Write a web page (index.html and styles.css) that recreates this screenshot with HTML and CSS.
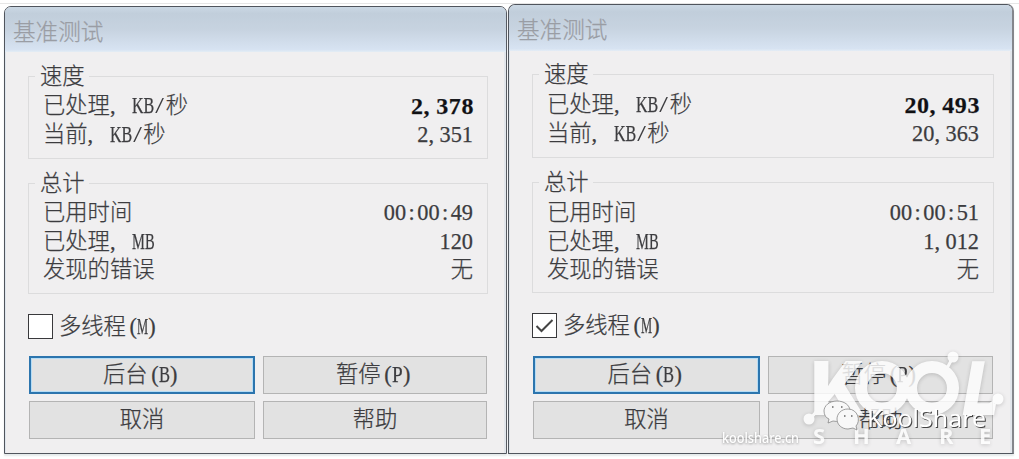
FILE: index.html
```html
<!DOCTYPE html>
<html lang="zh-CN">
<head>
    <meta charset="UTF-8">
    <meta name="viewport" content="width=device-width, initial-scale=1.0">
    <title>基准测试</title>
    <link rel="stylesheet" href="styles.css">
</head>
<body>
    <div class="windows">
        <!-- 单线程 -->
        <div class="window window-left">
            <div class="title-bar">基准测试</div>
            <div class="content">
                <div class="group speed">
                    <span class="legend">速度</span>
                    <div class="row"><span>已处理<i>,</i><i></i><b class="kb">KB</b><i class="slash">/</i>秒</span><strong>2<i>,</i>378</strong></div>
                    <div class="row"><span>当前<i>,</i><i></i><b class="kb">KB</b><i class="slash">/</i>秒</span><span>2<i>,</i>351</span></div>
                </div>
                <div class="group total">
                    <span class="legend">总计</span>
                    <div class="row"><span>已用时间</span><span>00<i class="colon">:</i>00<i class="colon">:</i>49</span></div>
                    <div class="row"><span>已处理<i>,</i><i></i><b class="mb">MB</b></span><span>120</span></div>
                    <div class="row"><span>发现的错误</span><span>无</span></div>
                </div>
                <div class="check-row">
                    <span class="checkbox"></span>
                    <span class="check-label">多线程<i class="open">(</i><b class="m">M</b><i>)</i></span>
                </div>
                <div class="buttons">
                    <button class="button button-default"><span>后台<i class="open">(</i><b class="b">B</b><i>)</i></span></button>
                    <button class="button"><span>暂停<i class="open">(</i><b class="p">P</b><i>)</i></span></button>
                    <button class="button">取消</button>
                    <button class="button">帮助</button>
                </div>
            </div>
        </div>

        <!-- 多线程 -->
        <div class="window window-right">
            <div class="title-bar">基准测试</div>
            <div class="content">
                <div class="group speed">
                    <span class="legend">速度</span>
                    <div class="row"><span>已处理<i>,</i><i></i><b class="kb">KB</b><i class="slash">/</i>秒</span><strong>20<i>,</i>493</strong></div>
                    <div class="row"><span>当前<i>,</i><i></i><b class="kb">KB</b><i class="slash">/</i>秒</span><span>20<i>,</i>363</span></div>
                </div>
                <div class="group total">
                    <span class="legend">总计</span>
                    <div class="row"><span>已用时间</span><span>00<i class="colon">:</i>00<i class="colon">:</i>51</span></div>
                    <div class="row"><span>已处理<i>,</i><i></i><b class="mb">MB</b></span><span>1<i>,</i>012</span></div>
                    <div class="row"><span>发现的错误</span><span>无</span></div>
                </div>
                <div class="check-row">
                    <span class="checkbox">
                        <svg width="23" height="23" viewBox="0 0 23 23"><path d="M3.5 12 L8.5 17 L19.5 6" fill="none" stroke="#444" stroke-width="2"/></svg>
                    </span>
                    <span class="check-label">多线程<i class="open">(</i><b class="m">M</b><i>)</i></span>
                </div>
                <div class="buttons">
                    <button class="button button-default"><span>后台<i class="open">(</i><b class="b">B</b><i>)</i></span></button>
                    <button class="button"><span>暂停<i class="open">(</i><b class="p">P</b><i>)</i></span></button>
                    <button class="button">取消</button>
                    <button class="button">帮助</button>
                </div>
            </div>
        </div>
    </div>

    <!-- 水印 -->
    <svg class="watermark" width="309" height="119" viewBox="710 340 309 119">
        <g class="logo">
            <text class="kool" y="415"><tspan x="811" textLength="54" lengthAdjust="spacingAndGlyphs">K</tspan></text>
            <circle cx="882" cy="388" r="21"/>
            <circle cx="932" cy="388" r="21"/>
            <text class="kool" y="415" transform="translate(73 0) skewX(-10)"><tspan x="960" textLength="36" lengthAdjust="spacingAndGlyphs">L</tspan></text>
            <path d="M810 419 L829 397 M945 372 L953 357 M986 408 L997 399"/>
            <circle class="dot" cx="809" cy="419" r="5.5"/>
            <circle class="dot" cx="953" cy="357" r="5.5"/>
            <circle class="dot" cx="998" cy="399" r="5.5"/>
            <text class="share" y="444" x="813 853 896 939 979">SHARE</text>
        </g>
        <g class="wechat">
            <path d="M837 401 C829 401 824 406 824 411 C824 415 826 418 829 419 L828 423 L833 421 C842 423 850 418 850 411 C850 405 844 401 837 401 Z"/>
            <path d="M848 409 C841 409 837 414 837 419 C837 425 842 429 848 429 L853 428 L857 430 L856 426 C861 421 858 409 848 409 Z"/>
            <path class="eyes" d="M832 407 h1.5 M841 407 h1.5 M844 416 h1.5 M851 416 h1.5"/>
        </g>
        <text class="name" x="867" y="427" textLength="119" lengthAdjust="spacingAndGlyphs">KoolShare</text>
        <text class="site" x="722" y="443" textLength="77" lengthAdjust="spacingAndGlyphs">koolshare.cn</text>
    </svg>
</body>
</html>
```
FILE: styles.css
```css
* {
    box-sizing: border-box;
}

body {
    margin: 0;
    padding-top: 3px;
    height: 459px;
    overflow: hidden;
    background: linear-gradient(#fff 3px, #e6e6e6 3px, #e6e6e6 4px, #fff 4px);
    font-family: "Liberation Serif", "Noto Sans CJK SC", serif;
    font-size: 22.3px;
    font-weight: 300;
    color: #3c3c3f;
    -webkit-text-stroke: 0.25px #3c3c3f;
}

.windows {
    display: flex;
    align-items: flex-end;
    gap: 1px;
    height: 451px;
    padding-left: 4px;
}

.window {
    background: #f0eff0;
    border: 1px solid #50555d;
    border-radius: 7px 7px 0 0;
    box-shadow: inset 1px 0 #dfe6ed, inset -2px 0 #e2e6ec, 0 2px 2px #e4e9ea;
    overflow: hidden;
}

.window-left {
    width: 503px;
    height: 448px;
}

.window-right {
    width: 506px;
    height: 450px;
    border-right: 2px solid #84868c;
}

.title-bar {
    height: 45px;
    padding-left: 8px;
    background: linear-gradient(#cbd8e4 0, #c1cedb 15%, #c7d3e0 50%, #d7e3f2 95%, #e4edf5);
    color: #9a9da4;
    -webkit-text-stroke: 0.25px #9a9da4;
    font-family: "Noto Sans CJK SC", sans-serif;
    font-size: 22.6px;
    line-height: 48px;
}

.window-right .title-bar {
    height: 46px;
}

.content {
    padding: 24px 18px 0 23px;
}

.window-right .content {
    padding-top: 23px;
}

.group {
    border: 1px solid #dcdcdd;
    padding: 0 14px;
}

.speed {
    height: 83px;
    margin-bottom: 24px;
}

.total {
    height: 111px;
    margin-bottom: 19px;
}

.window-right .speed {
    height: 84px;
}

.legend {
    display: block;
    width: 54px;
    height: 28px;
    margin: 0 0 -13px -8px;
    padding-left: 5px;
    background: #f0eff0;
    line-height: 28px;
    transform: translateY(-14px);
}

.window-right .legend {
    margin-bottom: -12px;
}

.row {
    display: flex;
    justify-content: space-between;
    height: 28.5px;
    line-height: 28px;
}

/* 半角字符 */
i {
    display: inline-block;
    width: 11.15px;
    font-style: normal;
    text-align: left;
}

.colon {
    text-align: center;
}

.open {
    text-align: right;
}

.slash {
    text-align: center;
    -webkit-text-stroke: 0;
    transform: scaleX(1.4);
}

b {
    display: inline-block;
    width: 11.15px;
    font-weight: 400;
    white-space: nowrap;
    transform-origin: left;
}

.kb {
    width: 22.3px;
    transform: scaleX(0.72);
}

.mb {
    width: 22.3px;
    transform: scaleX(0.65);
}

.m {
    transform: scaleX(0.56);
}

.b {
    transform: scaleX(0.74);
}

.p {
    transform: scaleX(0.86);
}

strong {
    font-size: 24px;
    font-weight: 700;
    letter-spacing: 0.6px;
    margin-right: -1px;
    color: #101013;
}

strong i {
    width: 12.6px;
}

.check-row {
    display: flex;
    align-items: center;
    gap: 7px;
    height: 26px;
    margin-bottom: 17px;
}

.check-label {
    margin-left: -1px;
    padding-bottom: 4px;
}

.checkbox {
    width: 25px;
    height: 25px;
    border: 1px solid #39393c;
    background: #fff;
}

.checkbox svg {
    display: block;
}

.buttons {
    display: grid;
    grid-template-columns: 226px 224px;
    grid-auto-rows: 38px;
    gap: 7px 8px;
    margin-left: 1px;
}

.window-right .buttons {
    grid-template-columns: 227px 225px;
    margin-top: 18px;
}

.button {
    padding: 0;
    border: 1px solid #b4b4b4;
    background: #e2e2e2;
    color: inherit;
    font: inherit;
    line-height: 34px;
    -webkit-text-stroke: inherit;
}

.button-default {
    border: 2px solid #2c75ae;
    box-shadow: inset 0 0 0 1px #b5dcf5;
}

.watermark {
    position: absolute;
    left: 710px;
    top: 340px;
    -webkit-text-stroke: 0;
}

.logo {
    fill: #fff;
    opacity: 0.82;
    filter: drop-shadow(0 1px 2px rgba(0, 0, 0, 0.22));
}

.logo circle {
    fill: none;
    stroke: #fff;
    stroke-width: 12;
}

.logo path {
    stroke: #fff;
    stroke-width: 3;
}

.logo .dot {
    fill: #fff;
    stroke: none;
}

.kool {
    font: 900 74px Inter, sans-serif;
}

.share {
    font: 700 22px "Open Sans", sans-serif;
}

.wechat {
    fill: #f8f8f8;
    stroke: #888;
    stroke-width: 0.8;
}

.wechat .eyes {
    stroke: #666;
    stroke-width: 1.5;
}

.name {
    font: 400 23px "Noto Sans", sans-serif;
    fill: #fff;
    filter: drop-shadow(1px 1px 0.4px #444);
}

.site {
    font: 500 14px "Noto Sans", sans-serif;
    fill: #fff;
    filter: drop-shadow(0 1px 1px #999);
}
```
